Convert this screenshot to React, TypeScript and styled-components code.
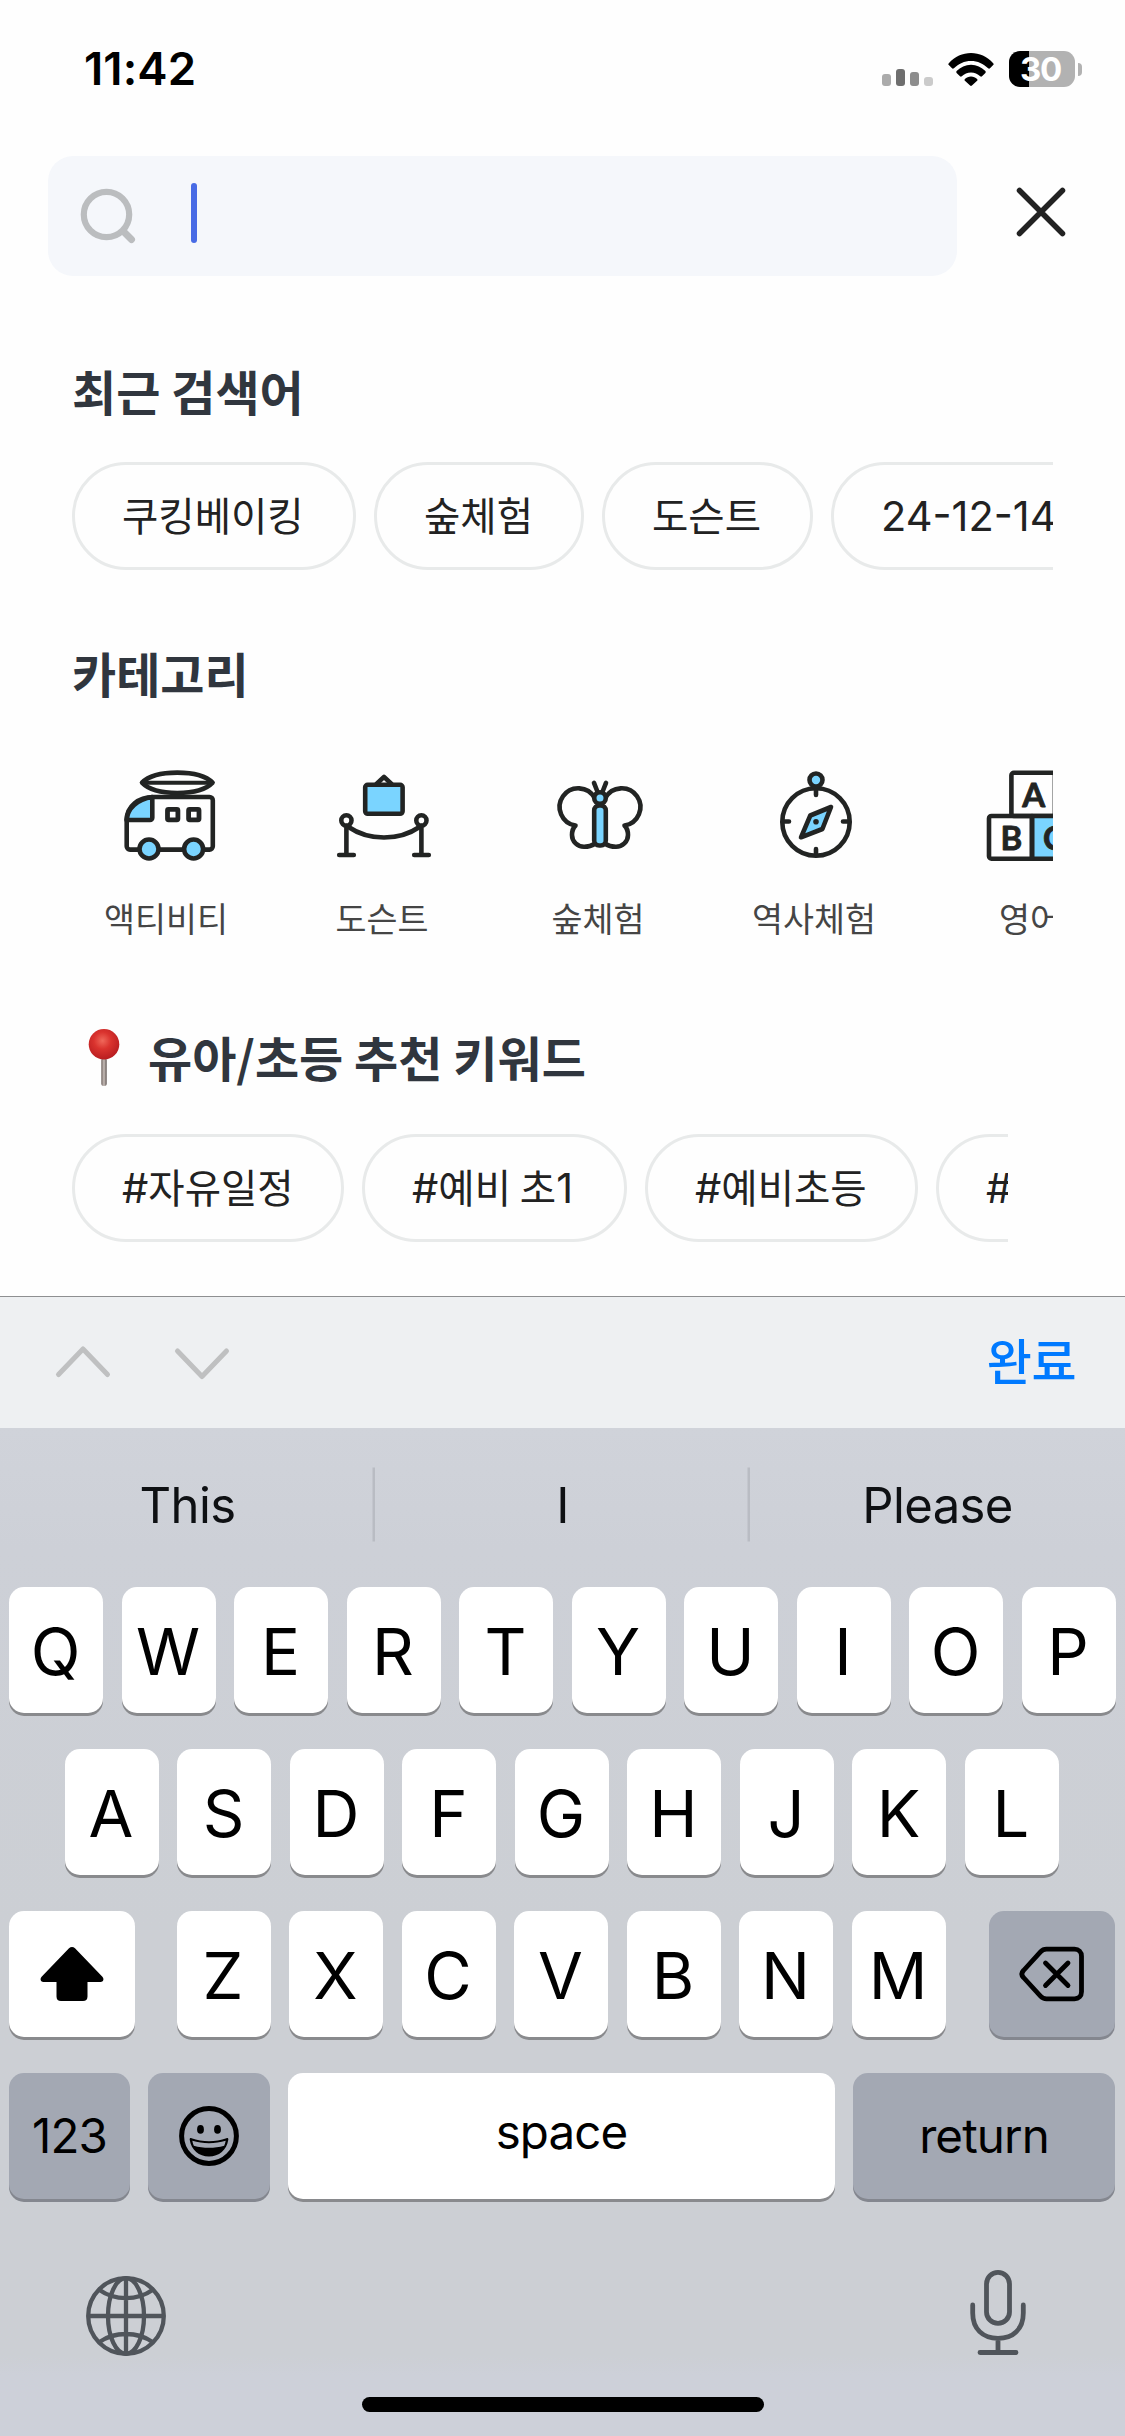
import React from "react";
import styled, { createGlobalStyle } from "styled-components";

const INK = "#222423";
const SKY = "#7ad4ff";

const GlobalStyle = createGlobalStyle`
  * { box-sizing: border-box; }
  html, body { margin: 0; padding: 0; background: #fefefe; }
  body { font-family: "Inter", "Noto Sans CJK KR", sans-serif; }
  svg { display: block; flex: none; }
  button { border: 0; padding: 0; background: none; font: inherit; color: inherit; }
`;

const Screen = styled.div`
  width: 1125px;
  height: 2436px;
  display: flex;
  flex-direction: column;
  overflow: hidden;
  background: #fefefe;
`;

/* ---------- status bar ---------- */

const StatusBar = styled.header`
  height: 156px;
  padding: 42px 43px 0 84px;
  display: flex;
  justify-content: space-between;
  align-items: flex-start;
`;

const Clock = styled.time`
  font: 600 45.5px/54px "Inter", sans-serif;
  letter-spacing: 0.1px;
  color: #000;
`;

const StatusIcons = styled.div`
  height: 54px;
  display: flex;
  align-items: center;
`;

const SignalBars = styled.div`
  height: 34px;
  display: flex;
  align-items: flex-end;
  gap: 5px;
  margin-right: 15px;
`;

const SignalBar = styled.span<{ $h: number; $tone: string }>`
  width: 9px;
  height: ${(p) => p.$h}px;
  border-radius: 3px;
  background: ${(p) => p.$tone};
`;

const Battery = styled.div`
  width: 66px;
  height: 36px;
  margin-left: 15px;
  border-radius: 11px;
  background: linear-gradient(90deg, #000 0 20px, #b2b2b2 20px);
  color: #fff;
  font: 700 33px/36px "Inter", sans-serif;
  letter-spacing: -1.2px;
  padding-left: 11px;
`;

const BatteryCap = styled.span`
  width: 4px;
  height: 13px;
  margin-left: 3px;
  border-radius: 0 4px 4px 0;
  background: #b2b2b2;
`;

/* ---------- search ---------- */

const SearchRow = styled.div`
  height: 120px;
  padding: 0 57px 0 48px;
  display: flex;
  justify-content: space-between;
`;

const SearchBox = styled.div`
  width: 909px;
  padding: 27px 0 0 30px;
  display: flex;
  border-radius: 25px;
  background: #f5f7fb;
`;

const Caret = styled.span`
  width: 6px;
  height: 60px;
  margin-left: 53px;
  border-radius: 3px;
  background: #486be5;
`;

const CloseButton = styled.button`
  padding-top: 29px;
  align-self: flex-start;
`;

/* ---------- content ---------- */

const Content = styled.main`
  flex: 1;
  min-height: 0;
`;

const Section = styled.section<{ $top: number; $gap: number; $clip: number }>`
  margin-top: ${(p) => p.$top}px;
  padding: 0 ${(p) => p.$clip}px 0 72px;
  display: flex;
  flex-direction: column;
  gap: ${(p) => p.$gap}px;
`;

const Heading = styled.h2`
  margin: 0;
  height: 60px;
  display: flex;
  align-items: center;
  font: 700 48px/60px "Noto Sans CJK KR", sans-serif;
  color: #30363e;
  white-space: pre;
`;

const Scroller = styled.div<{ $gap: number }>`
  display: flex;
  gap: ${(p) => p.$gap}px;
  overflow: hidden;
`;

const Pill = styled.button<{ $w?: number }>`
  flex: none;
  height: 108px;
  width: ${(p) => (p.$w ? `${p.$w}px` : "auto")};
  padding: 0 47px 4px;
  border: 3px solid #e8eaea;
  border-radius: 54px;
  font: 400 39.5px/98px "Noto Sans CJK KR", sans-serif;
  color: #222;
  text-align: left;
  white-space: pre;
`;

const Latin = styled.span`
  font-family: "Inter", sans-serif;
  font-size: 41.5px;
`;

const Category = styled.div`
  flex: none;
  width: 192px;
  display: flex;
  flex-direction: column;
  align-items: center;
  gap: 29px;
`;

const CategoryName = styled.span`
  font: 400 33.7px/50px "Noto Sans CJK KR", sans-serif;
  color: #454545;
  margin-right: 4px;
`;

/* ---------- keyboard ---------- */

const AccessoryBar = styled.div`
  height: 132px;
  padding: 0 49px 0 53px;
  display: flex;
  align-items: center;
  border-top: 1px solid #8e8f91;
  background: #eef0f2;
`;

const ChevronGroup = styled.div`
  display: flex;
  gap: 59px;
  flex: 1;
`;

const Done = styled.button`
  font: 500 49px/60px "Noto Sans CJK KR", sans-serif;
  letter-spacing: -0.5px;
  padding-bottom: 8px;
  color: #007aff;
`;

const Keyboard = styled.div`
  height: 1008px;
  display: flex;
  flex-direction: column;
  background: linear-gradient(#d0d3da 0, #cdd0d7 12%, #cccfd4 50%, #cccfd4 92%, #cdd0d9 94%);
`;

const Suggestions = styled.div`
  height: 159px;
  padding-top: 39px;
  display: flex;
`;

const Suggestion = styled.div`
  flex: 1;
  height: 75px;
  font: 400 49px/77px "Inter", sans-serif;
  letter-spacing: -0.6px;
  text-align: center;
  color: #0e1013;
  & + & {
    box-shadow: -3px 0 0 -0.5px #b9bcc3;
  }
`;

const Keys = styled.div`
  display: flex;
  flex-direction: column;
  gap: 36px;
  padding: 0 9px;
`;

const KeyRow = styled.div<{ $inset?: number; $gap?: number }>`
  display: flex;
  gap: ${(p) => p.$gap ?? 18.5}px;
  padding: 0 ${(p) => p.$inset ?? 0}px;
`;

const Key = styled.button<{
  $w?: number;
  $dark?: boolean;
  $small?: boolean;
  $lift?: number;
  $ml?: number;
  $mr?: number;
}>`
  width: ${(p) => p.$w ?? 94}px;
  height: 126px;
  margin-left: ${(p) => p.$ml ?? 0}px;
  margin-right: ${(p) => p.$mr ?? 0}px;
  padding-bottom: ${(p) => p.$lift ?? 0}px;
  display: flex;
  align-items: center;
  justify-content: center;
  border-radius: 15px;
  background: ${(p) => (p.$dark ? "#a3a8b3" : "#fff")};
  box-shadow: 0 3px 0 ${(p) => (p.$dark ? "#84878f" : "#898a8d")};
  color: #000;
  font-family: "Inter", sans-serif;
  font-size: ${(p) => (p.$small ? 47.5 : 65)}px;
  line-height: 126px;
  letter-spacing: ${(p) => (p.$small ? -0.9 : 0)}px;
`;

const KeyLetter = styled.span`
  padding-top: 3px;
  margin-left: -1px;
`;

const BottomBar = styled.div`
  flex: 1;
  display: flex;
  justify-content: space-between;
  padding: 69px 92px 0 81px;
`;

const GlobeButton = styled.button`
  align-self: flex-start;
  padding-top: 6px;
`;

const MicButton = styled.button`
  align-self: flex-start;
`;

const HomeIndicator = styled.div`
  width: 402px;
  height: 15px;
  margin: 0 auto 24px;
  border-radius: 8px;
  background: #000;
`;

/* ---------- icons ---------- */

const WifiIcon = () => (
  <svg width="46" height="34" viewBox="0 0 46 34">
    <path d="M0.8 11.2C7 4.6 14.6 1 23 1s16 3.600 22.200 10.200c.6.6.6 1.300 0 1.900l-3.200 3.200c-.5.5-1.300.5-1.900 0C35.400 11.500 29.600 8.900 23 8.900S10.600 11.500 5.900 16.300c-.6.5-1.400.5-1.900 0L.8 13.100c-.6-.6-.6-1.300 0-1.900z" />
    <path d="M8.600 19.100C12.500 15.100 17.500 12.800 23 12.800s10.500 2.300 14.400 6.300c.5.6.5 1.300 0 1.900l-3.400 3.300c-.5.5-1.200.5-1.800 0-2.500-2.400-5.700-3.800-9.200-3.800s-6.700 1.400-9.200 3.800c-.6.5-1.300.5-1.800 0L8.600 21c-.5-.6-.5-1.300 0-1.900z" />
    <path d="M16.900 27.100c1.600-1.600 3.700-2.600 6.100-2.600s4.500 1 6.100 2.600c.5.5.5 1.200 0 1.700l-5.200 4.800c-.5.5-1.300.5-1.800 0l-5.200-4.800c-.5-.5-.5-1.200 0-1.700z" />
  </svg>
);

const SearchIcon = () => (
  <svg width="60" height="66" viewBox="0 0 60 66" fill="none" stroke="#bbbdbf" strokeWidth="6.200">
    <circle cx="28.500" cy="31.500" r="22.700" />
    <path d="M46 49l7.500 7.500" strokeWidth="7" strokeLinecap="round" />
  </svg>
);

const CloseIcon = () => (
  <svg width="54" height="54" viewBox="0 0 54 54" stroke="#222" strokeWidth="5.500" strokeLinecap="round">
    <path d="M5.500 5.500l43 43M48.500 5.500l-43 43" />
  </svg>
);

const LineIcon = ({ children }: { children: React.ReactNode }) => (
  <svg
    width="96"
    height="96"
    viewBox="0 0 96 96"
    fill="none"
    stroke={INK}
    strokeWidth="4.600"
    strokeLinecap="round"
    strokeLinejoin="round"
  >
    {children}
  </svg>
);

const VanIcon = () => (
  <LineIcon>
    <path d="M22 14.700C29 7.500 42 4.600 57.300 4.600s28.300 2.900 35.300 10.100C85.600 22 72.600 25 57.300 25S29 22 22 14.700z" />
    <path d="M23 14.700h69" strokeWidth="4" />
    <path d="M32.300 29C17 31.500 7.500 40 6.500 52H30a2.300 2.300 0 0 0 2.300-2.300z" fill={SKY} />
    <path d="M33 29h56.500a3.300 3.300 0 0 1 3.300 3.300v46a3.300 3.300 0 0 1-3.300 3.300H10a3.300 3.300 0 0 1-3.300-3.300V52C6.700 38 19 29 33 29z" />
    <rect x="47.500" y="41.400" width="10.400" height="10.400" rx="1" strokeWidth="4.800" />
    <rect x="68.600" y="41.400" width="10.400" height="10.400" rx="1" strokeWidth="4.800" />
    <circle cx="29" cy="81" r="9.500" fill={SKY} />
    <circle cx="73.600" cy="81" r="9.500" fill={SKY} />
  </LineIcon>
);

const DocentIcon = () => (
  <LineIcon>
    <path d="M40.500 16L48 8.800 55.500 16" />
    <rect x="29.200" y="16.800" width="37.400" height="29" rx="2.500" fill={SKY} />
    <path d="M12.500 59C33 73 63 73 83.500 59" />
    <circle cx="10.400" cy="52.400" r="5.100" />
    <circle cx="85.400" cy="52.400" r="5.100" />
    <path d="M10.400 58v29M85.400 58v29M3.200 87h14.600M78.200 87h14.600" />
  </LineIcon>
);

const ButterflyIcon = () => (
  <LineIcon>
    <path d="M42.700 30A18.700 18.700 0 1 0 23.500 57.500C21 60 20 63 20 67A12 11.700 0 0 0 32.300 78.700C36.500 78.700 39.500 78 42.500 76" />
    <path d="M53.300 30A18.700 18.700 0 1 1 72.500 57.500C75 60 76 63 76 67A12 11.700 0 0 1 63.700 78.700C59.500 78.700 56.500 78 53.500 76" />
    <path d="M42 14.800l3.200 8.200M54 14.800L50.800 23" />
    <rect x="42.200" y="37.500" width="11.600" height="40" rx="5" fill={SKY} />
    <circle cx="48" cy="30" r="5.800" fill={SKY} />
  </LineIcon>
);

const CompassIcon = () => (
  <LineIcon>
    <circle cx="48" cy="54" r="33.700" />
    <path d="M48 21v6M48 81v6M15 53.500h6M75 53.500h6" />
    <circle cx="48" cy="12" r="6.500" fill={SKY} />
    <path d="M63 39L42.300 47.500 33 69.300 54.400 61z" fill={SKY} />
    <circle cx="48" cy="53.700" r="2.800" fill={INK} stroke="none" />
  </LineIcon>
);

const BlockLetter = styled.text`
  font: 700 33px "Lato", sans-serif;
  fill: ${INK};
  stroke: ${INK};
  stroke-width: 0.8px;
  text-anchor: middle;
`;

const BlocksIcon = () => (
  <LineIcon>
    <rect x="27.400" y="4.800" width="43.500" height="43.200" rx="2.500" />
    <path d="M48 48h40.500a2.500 2.500 0 0 1 2.500 2.500v37.700a2.500 2.500 0 0 1-2.500 2.500H48z" fill={SKY} />
    <path d="M48 48v42.700H7.500A2.500 2.500 0 0 1 5 88.200V50.500A2.500 2.500 0 0 1 7.500 48z" />
    <BlockLetter x="49.700" y="38.500">A</BlockLetter>
    <BlockLetter x="27.300" y="81.500">B</BlockLetter>
    <BlockLetter x="70" y="81.500">C</BlockLetter>
  </LineIcon>
);

const PinIcon = () => (
  <svg width="76" height="60" viewBox="0 0 76 60">
    <defs>
      <radialGradient id="pinHead" cx="45%" cy="38%" r="62%">
        <stop offset="0" stopColor="#f0685a" />
        <stop offset="0.450" stopColor="#da332e" />
        <stop offset="1" stopColor="#b81d20" />
      </radialGradient>
      <linearGradient id="pinStem">
        <stop offset="0" stopColor="#6d625e" />
        <stop offset="0.500" stopColor="#c9bfba" />
        <stop offset="1" stopColor="#5c5350" />
      </linearGradient>
    </defs>
    <rect x="29.300" y="29" width="5.400" height="28" rx="2.500" fill="url(#pinStem)" />
    <circle cx="32" cy="15.300" r="15.300" fill="url(#pinHead)" />
  </svg>
);

const HeadingText = styled.span`
  padding-bottom: 6px;
`;

const Chevron = ({ down }: { down?: boolean }) => (
  <svg width="60" height="36" viewBox="0 0 60 36" fill="none" stroke="#bfc0c1" strokeWidth="5" strokeLinecap="round" strokeLinejoin="round">
    <path d={down ? "M5.500 6L30 31.500 54.500 6" : "M5.500 29.500L30 4 54.500 29.500"} />
  </svg>
);

const ShiftIcon = () => (
  <svg width="64" height="56" viewBox="0 0 64 56">
    <path d="M29 2.200c1.800-1.700 4.200-1.700 6 0l27.400 28.600c2 2.300 1 5.200-2 5.200H47.500v14.500c0 3-1.600 4.500-4.500 4.500H21c-2.900 0-4.500-1.500-4.500-4.500V36H3.600c-3 0-4-2.900-2-5.200z" />
  </svg>
);

const BackspaceIcon = () => (
  <svg width="66" height="56" viewBox="0 0 66 56" fill="none" stroke="#000" strokeWidth="4.800" strokeLinecap="round" strokeLinejoin="round">
    <path d="M27.500 3.200H55.500c4.300 0 7 2.700 7 7v35.600c0 4.300-2.700 7-7 7H27.500c-2.500 0-4.300-.8-6-2.600L4.500 31.500c-2.200-2.300-2.200-4.700 0-7l17-18.700c1.700-1.800 3.500-2.600 6-2.600z" />
    <path d="M26.500 17l22.500 22.500M49 17L26.500 39.500" />
  </svg>
);

const SmileIcon = () => (
  <svg width="62" height="62" viewBox="0 0 62 62">
    <circle cx="31" cy="31" r="27.400" fill="none" stroke="#000" strokeWidth="5" />
    <ellipse cx="22.500" cy="24.400" rx="3.400" ry="4.300" />
    <ellipse cx="39.500" cy="24.400" rx="3.400" ry="4.300" />
    <path d="M13.500 33.200c11 4 24 4 35 0 1.300-.4 2 .3 1.800 1.500C48.700 45 41 51.500 31 51.500S13.300 45 11.700 34.700c-.2-1.200.5-1.900 1.800-1.500z" />
    <path d="M14.300 35.800c10.600 3.200 22.800 3.200 33.400 0-.3 1.800-.8 3.400-1.500 4.900-9.700 2.700-20.700 2.700-30.400 0-.7-1.500-1.200-3.100-1.500-4.900z" fill="#a3a8b3" />
  </svg>
);

const GlobeIcon = () => (
  <svg width="90" height="84" viewBox="0 0 90 84" fill="none" stroke="#50555b" strokeWidth="4.300">
    <circle cx="45" cy="42" r="37.800" />
    <ellipse cx="45" cy="42" rx="18" ry="37.800" />
    <path d="M45 4v76M7 42h76M18.500 16c15 10.700 38 10.700 53 0M18.500 68c15-10.700 38-10.700 53 0" />
  </svg>
);

const MicIcon = () => (
  <svg width="70" height="90" viewBox="0 0 70 90" fill="none" stroke="#50555b" strokeWidth="4.800" strokeLinecap="round">
    <rect x="23.500" y="4.400" width="23" height="51" rx="11.500" />
    <path d="M9.700 37v8c0 16 10 25.300 25.300 25.300S60.300 61 60.300 45v-8M35 70.300V84M17 84.500h36" />
  </svg>
);

/* ---------- data ---------- */

const signal = [
  { h: 12, tone: "#ababab" },
  { h: 17, tone: "#6e6e6e" },
  { h: 14, tone: "#8d8d8d" },
  { h: 9, tone: "#cbcbcb" },
];

const recent = [
  { text: "쿠킹베이킹", w: 284 },
  { text: "숲체험", w: 210 },
  { text: "도슨트", w: 211 },
  { text: "24-12-14", w: 284 },
];

const keywords = [
  { text: "#자유일정", w: 272 },
  { text: "#예비 초1", w: 265 },
  { text: "#예비초등", w: 273 },
  { text: "#초등", w: 210 },
];

const categories = [
  { name: "액티비티", Icon: VanIcon },
  { name: "도슨트", Icon: DocentIcon },
  { name: "숲체험", Icon: ButterflyIcon },
  { name: "역사체험", Icon: CompassIcon },
  { name: "영어", Icon: BlocksIcon },
];

/* Latin characters and digits are set in their own face beside the Hangul. */
const Mixed = ({ text }: { text: string }) => (
  <>
    {text.split(/([!-~]+)/).map((part, i) => (i % 2 ? <Latin key={i}>{part}</Latin> : part))}
  </>
);

const LetterKeys = ({ letters }: { letters: string }) => (
  <>
    {[...letters].map((k) => (
      <Key key={k}>
        <KeyLetter>{k}</KeyLetter>
      </Key>
    ))}
  </>
);

export default function App() {
  return (
    <>
      <GlobalStyle />
      <Screen>
        <StatusBar>
          <Clock>11:42</Clock>
          <StatusIcons>
            <SignalBars>
              {signal.map((b) => (
                <SignalBar key={b.tone} $h={b.h} $tone={b.tone} />
              ))}
            </SignalBars>
            <WifiIcon />
            <Battery>30</Battery>
            <BatteryCap />
          </StatusIcons>
        </StatusBar>

        <SearchRow>
          <SearchBox>
            <SearchIcon />
            <Caret />
          </SearchBox>
          <CloseButton aria-label="닫기">
            <CloseIcon />
          </CloseButton>
        </SearchRow>

        <Content>
          <Section $top={87} $gap={39} $clip={72}>
            <Heading>
              <HeadingText>최근 검색어</HeadingText>
            </Heading>
            <Scroller $gap={18}>
              {recent.map((p) => (
                <Pill key={p.text} $w={p.w}>
                  <Mixed text={p.text} />
                </Pill>
              ))}
            </Scroller>
          </Section>

          <Section $top={75} $gap={63} $clip={72}>
            <Heading>
              <HeadingText>카테고리</HeadingText>
            </Heading>
            <Scroller $gap={24}>
              {categories.map(({ name, Icon }) => (
                <Category key={name}>
                  <Icon />
                  <CategoryName>{name}</CategoryName>
                </Category>
              ))}
            </Scroller>
          </Section>

          <Section $top={86} $gap={45} $clip={117}>
            <Heading>
              <PinIcon />
              <HeadingText>유아/초등 추천 키워드</HeadingText>
            </Heading>
            <Scroller $gap={18}>
              {keywords.map((p) => (
                <Pill key={p.text} $w={p.w}>
                  <Mixed text={p.text} />
                </Pill>
              ))}
            </Scroller>
          </Section>
        </Content>

        <AccessoryBar>
          <ChevronGroup>
            <Chevron />
            <Chevron down />
          </ChevronGroup>
          <Done>완료</Done>
        </AccessoryBar>

        <Keyboard>
          <Suggestions>
            <Suggestion>This</Suggestion>
            <Suggestion>I</Suggestion>
            <Suggestion>Please</Suggestion>
          </Suggestions>
          <Keys>
            <KeyRow>
              <LetterKeys letters="QWERTYUIOP" />
            </KeyRow>
            <KeyRow $inset={55.5}>
              <LetterKeys letters="ASDFGHJKL" />
            </KeyRow>
            <KeyRow>
              <Key $w={126} $mr={23}>
                <ShiftIcon />
              </Key>
              <LetterKeys letters="ZXCVBNM" />
              <Key $w={126} $ml={24.5} $dark>
                <BackspaceIcon />
              </Key>
            </KeyRow>
            <KeyRow $gap={18}>
              <Key $w={121} $dark $small>
                123
              </Key>
              <Key $w={122} $dark>
                <SmileIcon />
              </Key>
              <Key $w={547} $small $lift={8}>
                space
              </Key>
              <Key $w={262} $dark $small>
                return
              </Key>
            </KeyRow>
          </Keys>
          <BottomBar>
            <GlobeButton aria-label="Next keyboard">
              <GlobeIcon />
            </GlobeButton>
            <MicButton aria-label="Dictate">
              <MicIcon />
            </MicButton>
          </BottomBar>
          <HomeIndicator />
        </Keyboard>
      </Screen>
    </>
  );
}
